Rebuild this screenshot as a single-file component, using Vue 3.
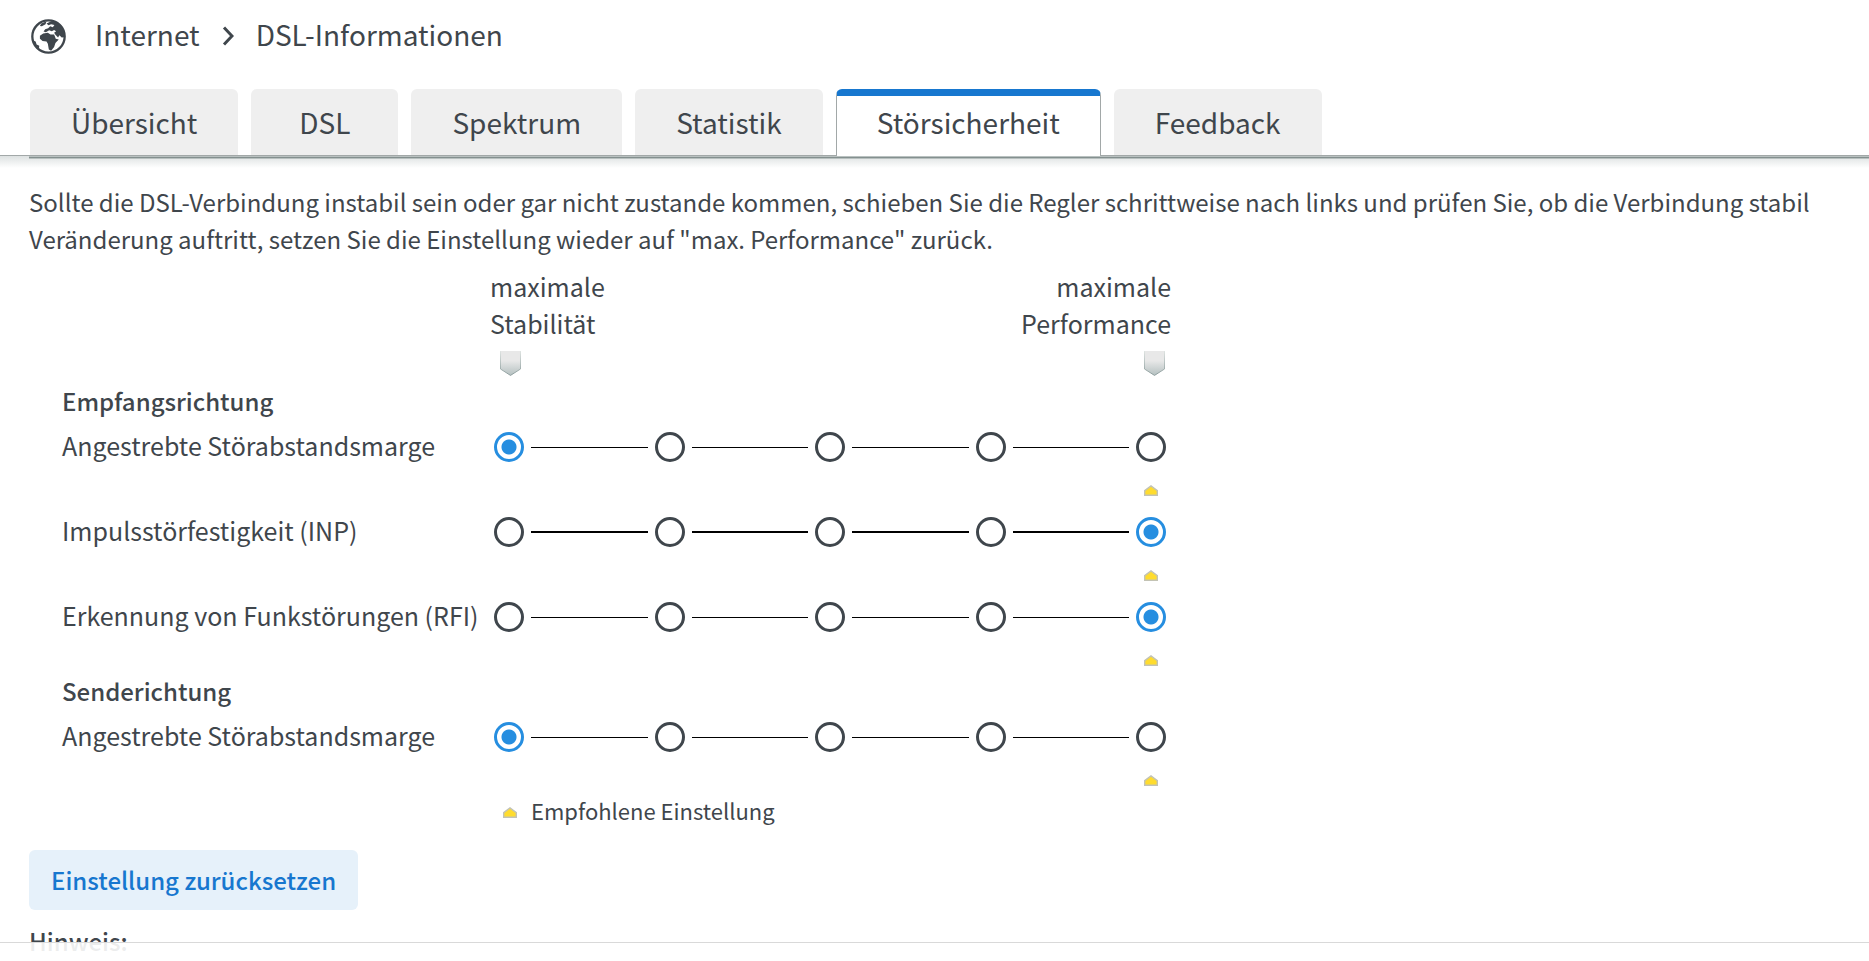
<script setup>
import { ref } from 'vue'

const tabs = ['Übersicht', 'DSL', 'Spektrum', 'Statistik', 'Störsicherheit', 'Feedback']
const activeTab = ref('Störsicherheit')

const groups = ref([
  {
    title: 'Empfangsrichtung',
    rows: [
      { id: 'rx-snr', label: 'Angestrebte Störabstandsmarge', value: 1 },
      { id: 'rx-inp', label: 'Impulsstörfestigkeit (INP)', value: 5, strong: true },
      { id: 'rx-rfi', label: 'Erkennung von Funkstörungen (RFI)', value: 5 },
    ],
  },
  {
    title: 'Senderichtung',
    rows: [{ id: 'tx-snr', label: 'Angestrebte Störabstandsmarge', value: 1 }],
  },
])
</script>

<template>
  <div class="page">
    <header class="crumbs">
      <svg class="globe" viewBox="33 24 106 106" aria-hidden="true">
        <circle cx="86" cy="77" r="49" fill="#fff" stroke="#3f464c" stroke-width="7" />
        <path fill="#3f464c" d="M60 75 L70 68 L84 66 L92 71 L103 71 L108 84 L117 86 L107 97 L103 109 L94 120 L87 116 L84 99 L80 92 L68 91 L60 84Z" />
        <path fill="#3f464c" d="M96 30 L110 32 L126 45 L136 66 L134 79 L126 80 L119 73 L115 80 L107 72 L103 66 L109 61 L103 57 L96 61 L88 58 L78 64 L71 62 L76 55 L85 52 L91 46 L99 49 L104 42 L94 40 L86 43 L80 38Z" />
        <path fill="#3f464c" d="M64 38 L80 31 L77 40 L66 46 L60 45Z" />
        <path fill="#3f464c" d="M37 88 L47 92 L50 101 L58 105 L57 115 L43 103Z" />
      </svg>
      <a href="#internet">Internet</a>
      <svg class="chevron" viewBox="0 0 12 20" aria-hidden="true">
        <path d="M2 1.5 L10 10 L2 18.5" fill="none" stroke="#3f464c" stroke-width="3" />
      </svg>
      <span>DSL-Informationen</span>
    </header>

    <nav class="tabs">
      <button
        v-for="t in tabs"
        :key="t"
        type="button"
        class="tab"
        :class="{ active: t === activeTab }"
        @click="activeTab = t"
      >{{ t }}</button>
    </nav>
    <div class="shade"></div>

    <main class="content">
      <p class="intro">
        Sollte die DSL-Verbindung instabil sein oder gar nicht zustande kommen, schieben Sie die Regler schrittweise nach links und prüfen Sie, ob die Verbindung stabil<br>
        Veränderung auftritt, setzen Sie die Einstellung wieder auf "max. Performance" zurück.
      </p>

      <div class="scale">
        <div class="end">
          <span>maximale<br>Stabilität</span>
          <svg class="pin" viewBox="0 0 21 25" aria-hidden="true">
            <defs>
              <linearGradient id="pinFill" x1="0" y1="0" x2="0" y2="1">
                <stop offset="0.4" stop-color="#e8e8e8" />
                <stop offset="1" stop-color="#b4c0c0" />
              </linearGradient>
              <linearGradient id="pinEdge" x1="0" y1="0" x2="0" y2="1">
                <stop offset="0" stop-color="#dfe4e2" />
                <stop offset="1" stop-color="#8c9c9c" />
              </linearGradient>
            </defs>
            <path d="M0.5 0 V18 L10.5 24.4 L20.5 18 V0" fill="url(#pinFill)" stroke="url(#pinEdge)" />
          </svg>
        </div>
        <div class="end right">
          <span>maximale<br>Performance</span>
          <svg class="pin" viewBox="0 0 21 25" aria-hidden="true">
            <path d="M0.5 0 V18 L10.5 24.4 L20.5 18 V0" fill="url(#pinFill)" stroke="url(#pinEdge)" />
          </svg>
        </div>
      </div>

      <section v-for="g in groups" :key="g.title" class="group">
        <h2>{{ g.title }}</h2>
        <div class="rows">
          <div v-for="r in g.rows" :key="r.id" class="row" role="radiogroup" :aria-labelledby="r.id">
            <span :id="r.id" class="name">{{ r.label }}</span>
            <div class="slider">
              <div class="track">
                <template v-for="n in 5" :key="n">
                  <span v-if="n > 1" class="line" :class="{ strong: r.strong }"></span>
                  <input v-model="r.value" type="radio" :name="r.id" :value="n" :aria-label="`${r.label}, Stufe ${n}`">
                </template>
              </div>
              <svg class="mark" viewBox="0 0 14 11" aria-hidden="true">
                <path d="M0.7 10.3 V5.6 L7 0.9 L13.3 5.6 V10.3Z" fill="#ffdc2e" stroke="#c3c3b4" stroke-width="1.4" />
              </svg>
            </div>
          </div>
        </div>
      </section>

      <div class="legend">
        <svg class="mark" viewBox="0 0 14 11" aria-hidden="true">
          <path d="M0.7 10.3 V5.6 L7 0.9 L13.3 5.6 V10.3Z" fill="#ffdc2e" stroke="#c3c3b4" stroke-width="1.4" />
        </svg>
        <span>Empfohlene Einstellung</span>
      </div>

      <button type="button" class="reset">Einstellung zurücksetzen</button>
      <h3>Hinweis:</h3>
    </main>

    <footer class="bar"></footer>
  </div>
</template>

<style>
body {
  margin: 0;
  overflow: hidden;
}
</style>

<style scoped>
.page {
  position: relative;
  height: 100vh;
  overflow: hidden;
  background: #fff;
  color: #3f464c;
  font-family: "Noto Sans CJK SC", "Noto Sans", sans-serif;
  font-size: 25px;
  line-height: 37px;
}
.crumbs {
  display: flex;
  align-items: center;
  height: 72px;
  padding-left: 31px;
  font-size: 28px;
}
.crumbs a,
.crumbs span {
  padding-bottom: 4px;
}
.crumbs a {
  color: inherit;
  text-decoration: none;
  margin: 0 22px 0 29px;
}
.globe {
  width: 35px;
  height: 35px;
}
.chevron {
  width: 12px;
  height: 20px;
  margin-right: 22px;
}
.tabs {
  display: flex;
  gap: 13px;
  margin-top: 17px;
  padding-left: 30px;
}
.tab {
  box-sizing: border-box;
  height: 66px;
  min-width: 147px;
  padding: 1px 41px 0;
  border: 0;
  border-radius: 6px 6px 0 0;
  background: #efefef;
  color: inherit;
  font: inherit;
  font-size: 28px;
  white-space: nowrap;
}
.tab.active {
  z-index: 1;
  height: 67px;
  margin-bottom: -1px;
  padding: 0 40px 7px;
  border: 1px solid #a2a8a8;
  border-top: 7px solid #1777cf;
  border-bottom: 0;
  background: #fff;
}
.shade {
  height: 12px;
  border-top: 1px solid #a2a8a8;
  background: linear-gradient(#dde1e1, #fff);
}
.shade::before {
  content: "";
  display: block;
  height: 1px;
  margin-left: 29px;
  border: solid #b9c1c0;
  border-width: 1px 0;
  background: #84908f;
}
.content {
  padding: 15px 0 0 29px;
}
.intro {
  margin: 0;
  font-size: 24px;
  white-space: nowrap;
}
.scale {
  display: flex;
  justify-content: space-between;
  width: 681px;
  margin: 11px 0 0 461px;
}
.end {
  display: flex;
  flex-direction: column;
}
.right {
  align-items: flex-end;
  text-align: right;
}
.pin {
  width: 21px;
  height: 25px;
  margin: 9px 6px 6px 10px;
}
.group {
  padding-left: 33px;
}
h2 {
  margin: 0 0 2px;
  font-size: 24px;
  font-weight: 500;
  line-height: 38px;
}
.rows {
  display: flex;
  flex-direction: column;
  gap: 5px;
}
.row {
  display: flex;
  height: 80px;
}
.name {
  width: 432px;
  line-height: 46px;
}
.slider {
  display: flex;
  flex-direction: column;
  align-items: flex-end;
  width: 672px;
}
.track {
  display: flex;
  align-items: center;
  gap: 7px;
  width: 100%;
  height: 50px;
}
.line {
  flex: 1;
  height: 1px;
  background: #000;
}
.line.strong {
  height: 2px;
}
input {
  appearance: none;
  box-sizing: border-box;
  width: 30px;
  height: 30px;
  margin: 0;
  border: 3px solid #3f464c;
  border-radius: 50%;
  background: #fff;
}
input:checked {
  border-color: #268ee0;
  background: radial-gradient(circle, #268ee0 7px, #fff 8px);
}
.mark {
  width: 14px;
  height: 11px;
}
.slider .mark {
  margin: 13px 8px 0 0;
}
.legend {
  display: flex;
  align-items: center;
  gap: 14px;
  height: 40px;
  padding-left: 474px;
  font-size: 22px;
}
.legend span {
  padding-bottom: 3px;
}
.reset {
  display: block;
  height: 60px;
  margin-top: 18px;
  padding: 0 22px 2px;
  border: 0;
  border-radius: 6px;
  background: #e6f1fa;
  color: #1777cf;
  font: inherit;
  font-size: 24px;
  font-weight: 500;
}
h3 {
  margin: 12px 0 0;
  font-size: 24px;
  font-weight: 500;
}
.bar {
  position: absolute;
  right: 0;
  bottom: 0;
  left: 0;
  height: 18px;
  border-top: 1px solid #d9d9d9;
  background: rgba(255, 255, 255, 0.9);
}
</style>
